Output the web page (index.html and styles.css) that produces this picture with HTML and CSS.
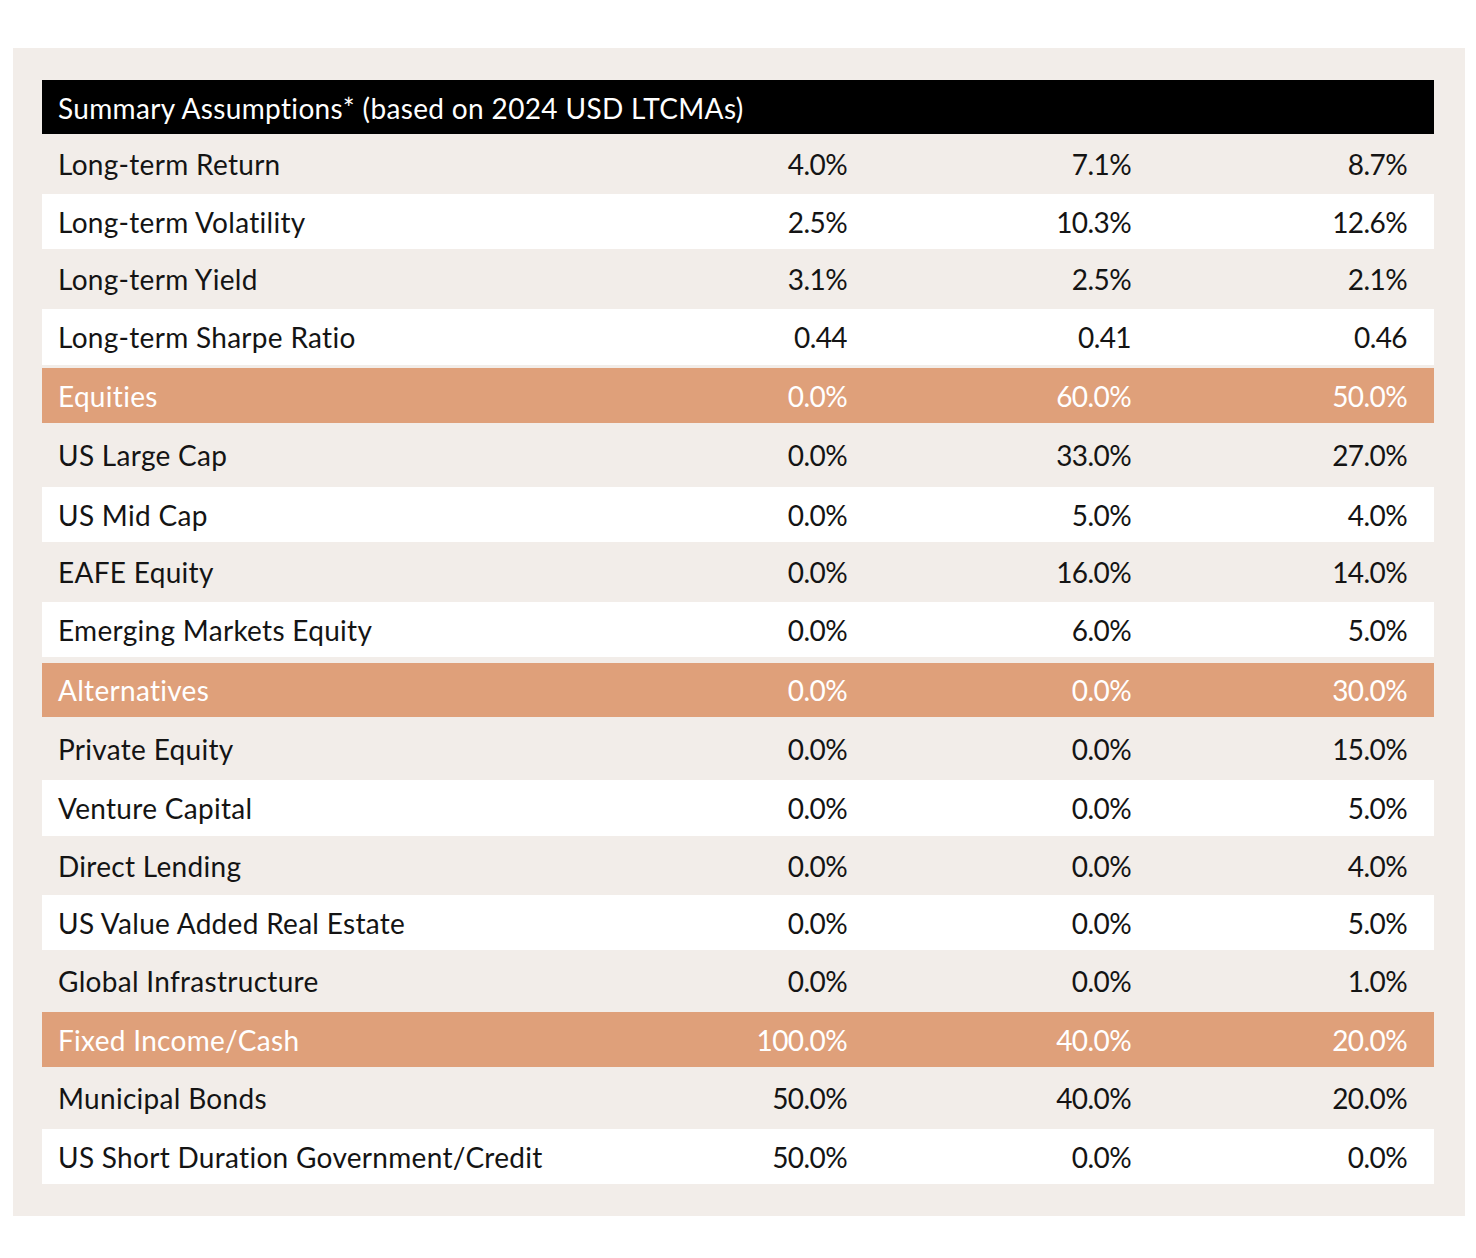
FILE: index.html
```html
<!DOCTYPE html>
<html lang="en">
<head>
<meta charset="utf-8">
<title>Summary Assumptions</title>
<link rel="stylesheet" href="styles.css">
</head>
<body>
<main class="panel">
  <div class="table">
    <div class="row head">Summary Assumptions* (based on 2024 USD LTCMAs)</div>

    <div class="row beige h60"><span class="label">Long-term Return</span><span class="num">4.0%</span><span class="num">7.1%</span><span class="num">8.7%</span></div>
    <div class="row white h55"><span class="label">Long-term Volatility</span><span class="num">2.5%</span><span class="num">10.3%</span><span class="num">12.6%</span></div>
    <div class="row beige h60"><span class="label">Long-term Yield</span><span class="num">3.1%</span><span class="num">2.5%</span><span class="num">2.1%</span></div>
    <div class="row white h56"><span class="label">Long-term Sharpe Ratio</span><span class="num">0.44</span><span class="num">0.41</span><span class="num">0.46</span></div>

    <div class="row group gap3"><span class="label">Equities</span><span class="num">0.0%</span><span class="num">60.0%</span><span class="num">50.0%</span></div>
    <div class="row beige h64"><span class="label">US Large Cap</span><span class="num">0.0%</span><span class="num">33.0%</span><span class="num">27.0%</span></div>
    <div class="row white h55"><span class="label">US Mid Cap</span><span class="num">0.0%</span><span class="num">5.0%</span><span class="num">4.0%</span></div>
    <div class="row beige h60"><span class="label">EAFE Equity</span><span class="num">0.0%</span><span class="num">16.0%</span><span class="num">14.0%</span></div>
    <div class="row white h55"><span class="label">Emerging Markets Equity</span><span class="num">0.0%</span><span class="num">6.0%</span><span class="num">5.0%</span></div>

    <div class="row group gap6"><span class="label">Alternatives</span><span class="num">0.0%</span><span class="num">0.0%</span><span class="num">30.0%</span></div>
    <div class="row beige h63"><span class="label">Private Equity</span><span class="num">0.0%</span><span class="num">0.0%</span><span class="num">15.0%</span></div>
    <div class="row white h56"><span class="label">Venture Capital</span><span class="num">0.0%</span><span class="num">0.0%</span><span class="num">5.0%</span></div>
    <div class="row beige h59"><span class="label">Direct Lending</span><span class="num">0.0%</span><span class="num">0.0%</span><span class="num">4.0%</span></div>
    <div class="row white h55"><span class="label">US Value Added Real Estate</span><span class="num">0.0%</span><span class="num">0.0%</span><span class="num">5.0%</span></div>
    <div class="row beige h62"><span class="label">Global Infrastructure</span><span class="num">0.0%</span><span class="num">0.0%</span><span class="num">1.0%</span></div>

    <div class="row group"><span class="label">Fixed Income/Cash</span><span class="num">100.0%</span><span class="num">40.0%</span><span class="num">20.0%</span></div>
    <div class="row beige h62"><span class="label">Municipal Bonds</span><span class="num">50.0%</span><span class="num">40.0%</span><span class="num">20.0%</span></div>
    <div class="row white h55"><span class="label">US Short Duration Government/Credit</span><span class="num">50.0%</span><span class="num">0.0%</span><span class="num">0.0%</span></div>
  </div>
</main>
</body>
</html>
```

FILE: styles.css
```css
html, body {
  margin: 0;
  padding: 0;
  background: #ffffff;
}

body {
  font-family: Lato, "Noto Sans", "Liberation Sans", sans-serif;
  color: #141414;
}

.panel {
  margin: 48px 11px 0 13px;
  background: #f2ede9;
  padding: 32px 31px 32px 29px;
}

.table {
  display: flex;
  flex-direction: column;
}

.row {
  display: grid;
  grid-template-columns: 1fr 200px 284px 276px;
  align-items: center;
  padding: 0 27px 0 16px;
  font-size: 28px;
  line-height: 1;
  box-sizing: border-box;
}

.label {
  letter-spacing: 0.3px;
}

.num {
  text-align: right;
  letter-spacing: -0.6px;
}

.head {
  display: block;
  background: #000000;
  color: #ffffff;
  height: 54px;
  line-height: 56px;
  font-size: 28px;
  letter-spacing: 0.35px;
}

.beige { background: transparent; }
.white { background: #ffffff; }

.group {
  background: #dfa07a;
  color: #ffffff;
  height: 55px;
}

.gap3 { margin-top: 3px; }
.gap6 { margin-top: 6px; height: 54px; }

.h55 { height: 55px; }
.h56 { height: 56px; }
.h59 { height: 59px; }
.h60 { height: 60px; }
.h62 { height: 62px; }
.h63 { height: 63px; }
.h64 { height: 64px; }
```
